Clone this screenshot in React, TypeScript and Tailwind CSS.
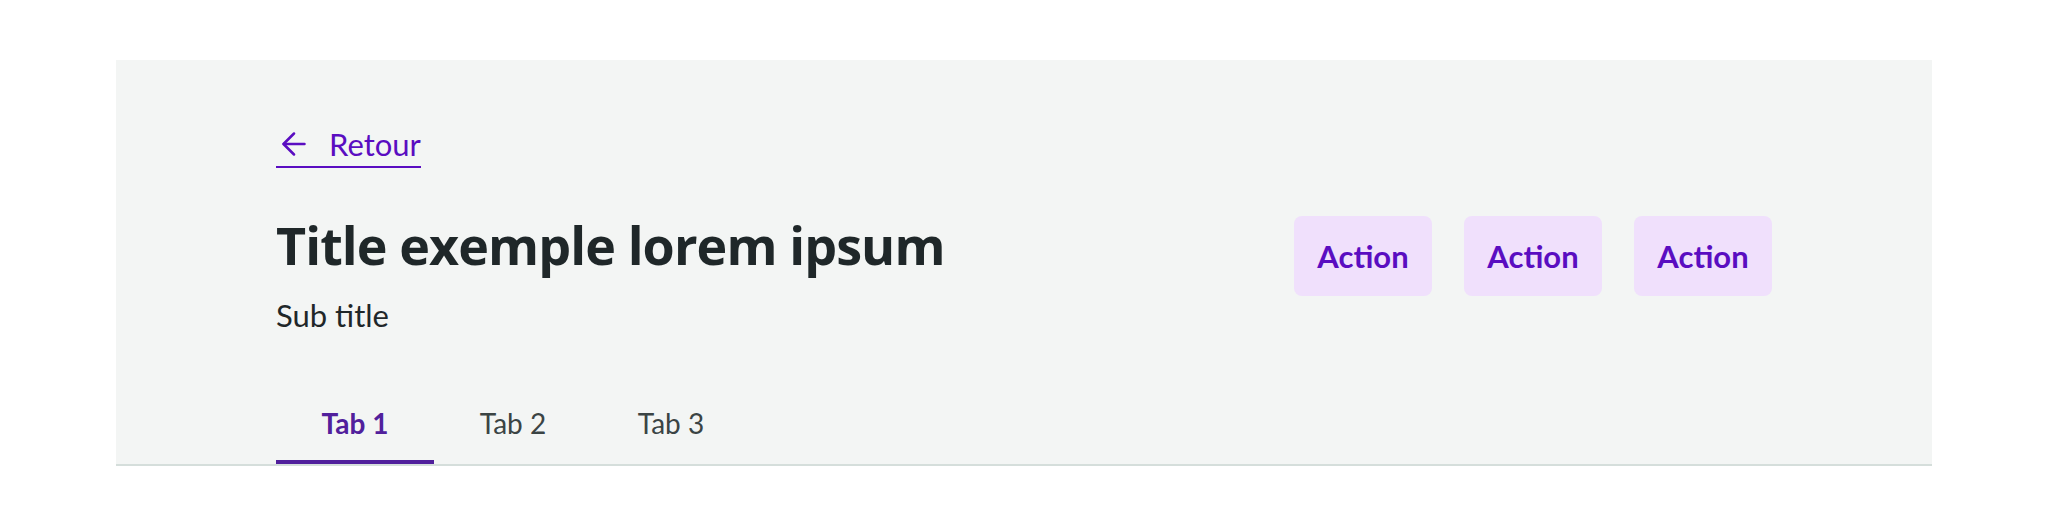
import { useState } from 'react'

const tabs = ['Tab 1', 'Tab 2', 'Tab 3']

/**
 * Page header
 * Back link, title, actions and tabs
 */
export default function App() {
  const [active, setActive] = useState(0)

  return (
    <div className="min-h-screen bg-white pt-[60px] px-[116px] font-['Lato',sans-serif]">
      <section className="bg-[#f3f5f4] border-b-2 border-[#d5dedb] px-[160px] pt-[64px]">
        {/* Back link */}
        <a
          href="#"
          className="inline-flex items-center gap-[17px] pb-[2px] border-b-2 border-[#5a0dc1] text-[#5a0dc1] text-[31px] leading-[40px]"
        >
          <span className="flex h-9 w-9 items-center justify-center">
            <svg width="24" height="24" viewBox="0 0 24 24" fill="none" stroke="currentColor" strokeWidth="2.5" strokeLinecap="round" strokeLinejoin="round">
              <path d="M22.5 12H1.8" />
              <path d="M12 1.5 1.5 12 12 22.5" />
            </svg>
          </span>
          <span>Retour</span>
        </a>

        {/* Title + actions */}
        <div className="flex items-start justify-between mt-[45px]">
          <div>
            <h1 className="font-['Open_Sans',sans-serif] font-bold text-[52px] leading-[64px] tracking-[-0.9px] text-[#1f2729]">
              Title exemple lorem ipsum
            </h1>
            <p className="mt-[18px] text-[31px] leading-[40px] text-[#1f2729]">Sub title</p>
          </div>
          <div className="flex gap-8 mt-[3px]">
            {[1, 2, 3].map((i) => (
              <button
                key={i}
                className="h-[80px] w-[138px] rounded-lg bg-[#f0e0fc] text-[#5a0dc1] font-bold text-[31px]"
              >
                Action
              </button>
            ))}
          </div>
        </div>

        {/* Tabs */}
        <div className="flex mt-[70px]">
          {tabs.map((t, i) => (
            <button
              key={t}
              onClick={() => setActive(i)}
              className={
                i === active
                  ? 'w-[158px] pb-[19px] border-b-4 border-[#51209c] text-[#51209c] font-bold text-[28px] leading-[36px]'
                  : 'w-[158px] pb-[19px] border-b-4 border-transparent text-[#3b4444] text-[28px] leading-[36px]'
              }
            >
              {t}
            </button>
          ))}
        </div>
      </section>
    </div>
  )
}
